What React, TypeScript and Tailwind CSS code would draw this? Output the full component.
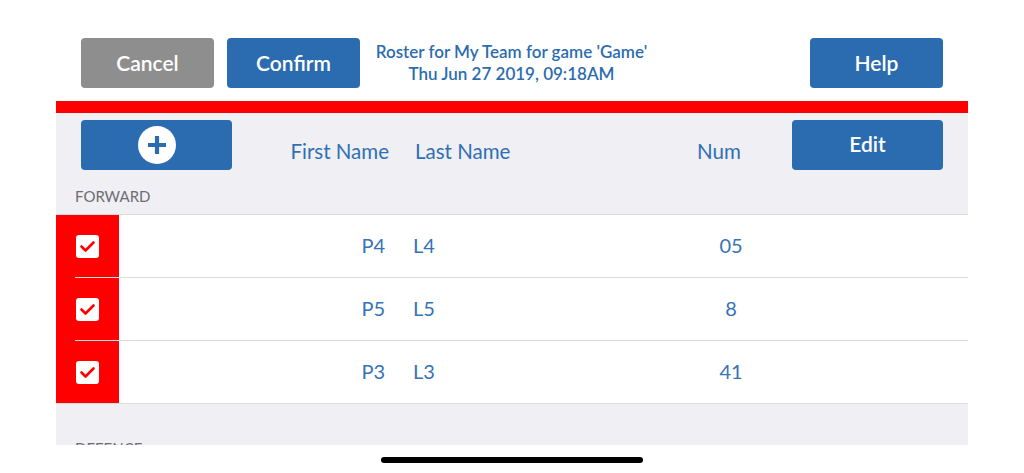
const rows = [
  { first: "P4", last: "L4", num: "05" },
  { first: "P5", last: "L5", num: "8" },
  { first: "P3", last: "L3", num: "41" },
];

function CheckBox() {
  return (
    <svg width="23" height="23" viewBox="0 0 23 23">
      <rect x="0" y="0" width="23" height="23" rx="3" fill="#ffffff" />
      <path
        d="M5.5 11.5 L9.5 15.5 L17.5 7.5"
        fill="none"
        stroke="#ff0000"
        strokeWidth="2.6"
        strokeLinecap="round"
        strokeLinejoin="round"
      />
    </svg>
  );
}

function PlusCircle() {
  return (
    <svg width="38" height="38" viewBox="0 0 38 38">
      <circle cx="19" cy="19" r="19" fill="#ffffff" />
      <path d="M19 10 V28 M10 19 H28" stroke="#2b6cb0" strokeWidth="4.2" strokeLinecap="butt" />
    </svg>
  );
}

export default function App() {
  return (
    <div className="w-[1024px] h-[473px] bg-white overflow-hidden font-['Lato',sans-serif] flex flex-col">
      {/* top bar */}
      <div className="flex items-center h-[50px] mt-[38px] px-[81px]">
        <button className="w-[133px] h-[50px] rounded-[4px] bg-[#8e8e8e] text-white text-[21px] font-semibold">
          Cancel
        </button>
        <button className="w-[133px] h-[50px] rounded-[4px] bg-[#2b6cb0] text-white text-[21px] font-semibold ml-[13px]">
          Confirm
        </button>
        <div className="w-[277px] ml-[13px] text-center text-[#2b6cb0] text-[17px] font-semibold leading-[22px] whitespace-nowrap">
          <p>Roster for My Team for game 'Game'</p>
          <p>Thu Jun 27 2019, 09:18AM</p>
        </div>
        <button className="w-[133px] h-[50px] rounded-[4px] bg-[#2b6cb0] text-white text-[21px] font-semibold ml-auto">
          Help
        </button>
      </div>

      <div className="mx-[56px] mt-[13px]">
        <div className="h-[12px] bg-[#ff0000]" />
        <div className="h-[332px] bg-[#efeff4] overflow-hidden">
          {/* column headers */}
          <div className="flex items-center h-[50px] mt-[7px] pl-[25px] pr-[25px]">
            <button className="w-[151px] h-[50px] rounded-[4px] bg-[#2b6cb0] flex items-center justify-center">
              <PlusCircle />
            </button>
            <span className="w-[157px] text-right text-[20.5px] text-[#2f6fb5] mt-[12px] whitespace-nowrap">
              First Name
            </span>
            <span className="w-[150px] ml-[26px] text-[20.5px] text-[#2f6fb5] mt-[12px] whitespace-nowrap">
              Last Name
            </span>
            <span className="ml-[132px] text-[20.5px] text-[#2f6fb5] mt-[12px]">Num</span>
            <button className="w-[151px] h-[50px] rounded-[4px] bg-[#2b6cb0] text-white text-[21px] font-semibold ml-auto pb-[2px]">
              Edit
            </button>
          </div>

          <div className="h-[44px] flex items-end pl-[19px] pb-[7px] text-[15px] text-[#6d6d72] uppercase">
            Forward
          </div>

          <div className="border-t border-[#dcdce0] bg-white">
            {rows.map((r, i) => (
              <div key={r.first} className="relative flex items-center h-[63px] pb-[3px]">
                <div className="absolute left-0 top-0 w-[63px] h-full bg-[#ff0000] flex items-center justify-center">
                  <CheckBox />
                </div>
                <span className="ml-[63px] w-[266px] text-right text-[20px] text-[#3573b8]">{r.first}</span>
                <span className="ml-[28px] text-[20px] text-[#3573b8]">{r.last}</span>
                <span className="absolute left-[650px] w-[50px] text-center text-[20px] text-[#3573b8]">
                  {r.num}
                </span>
                <div
                  className={
                    i === rows.length - 1
                      ? "absolute bottom-0 left-0 right-0 h-px bg-[#dcdce0]"
                      : "absolute bottom-0 left-[19px] right-0 h-px bg-[#dcdce0]"
                  }
                />
              </div>
            ))}
          </div>

          <div className="pt-[33px] pl-[19px] text-[15px] text-[#6d6d72] uppercase">Defence</div>
        </div>
      </div>

      <div className="flex justify-center mt-[12px]">
        <div className="w-[262px] h-[6px] rounded-full bg-black" />
      </div>
    </div>
  );
}
